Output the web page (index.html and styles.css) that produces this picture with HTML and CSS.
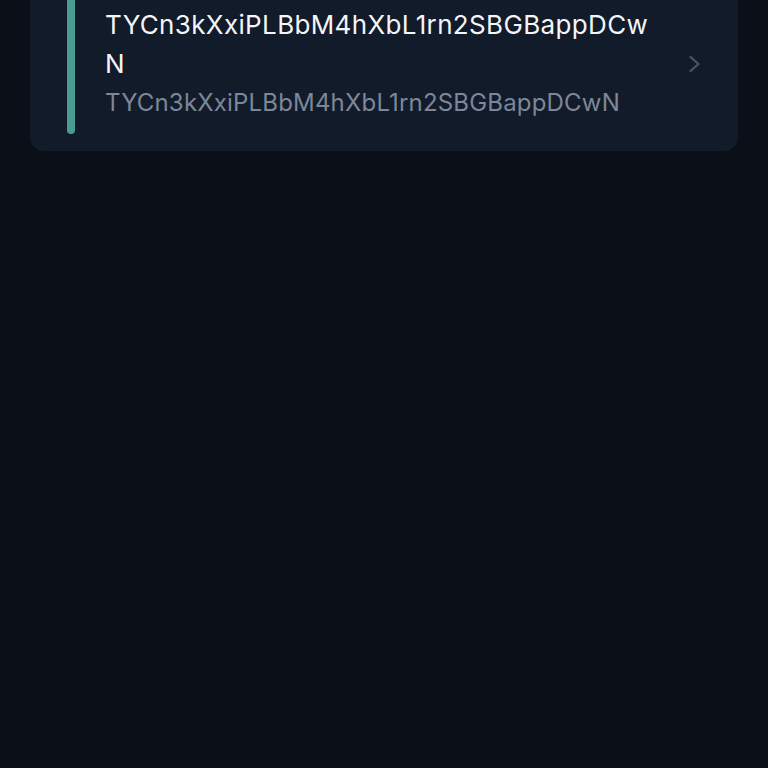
FILE: index.html
```html
<!DOCTYPE html>
<html>
<head>
<meta charset="utf-8">
<link rel="stylesheet" href="styles.css">
</head>
<body>
<main class="list">
  <div class="card">
    <div class="bar"></div>
    <div class="info">
      <div class="title">TYCn3kXxiPLBbM4hXbL1rn2SBGBappDCwN</div>
      <div class="sub">TYCn3kXxiPLBbM4hXbL1rn2SBGBappDCwN</div>
    </div>
    <svg class="chev" width="14" height="18" viewBox="0 0 14 18"><path d="M3.5 2 L11.5 9 L3.5 16" fill="none" stroke="#4b5566" stroke-width="2.3" stroke-linecap="round" stroke-linejoin="round"/></svg>
  </div>
</main>
</body>
</html>
```

FILE: styles.css
```css
html, body {
  margin: 0;
  padding: 0;
  background: #0b1018;
  height: 100%;
}
body {
  font-family: Inter, "Noto Sans", sans-serif;
  overflow: hidden;
}
.list {
  margin-top: -22px;
  padding: 0 30px;
}
.card {
  display: flex;
  align-items: center;
  background: #121b2a;
  border-radius: 14px;
  padding: 17px 37px 17px 37px;
}
.bar {
  align-self: stretch;
  width: 8px;
  border-radius: 4px;
  background: #4a9b94;
  margin-right: 30px;
  flex: none;
}
.info {
  flex: 1;
  min-width: 0;
  padding: 11px 28px 11px 0;
}
.title {
  color: #f3f5f8;
  font-size: 26px;
  letter-spacing: 0.35px;
  line-height: 38.5px;
  word-break: break-all;
}
.sub {
  color: #7d8798;
  font-size: 24px;
  letter-spacing: 0.18px;
  line-height: 38.5px;
  margin-top: 1px;
  word-break: break-all;
}
.chev {
  flex: none;
}
```
